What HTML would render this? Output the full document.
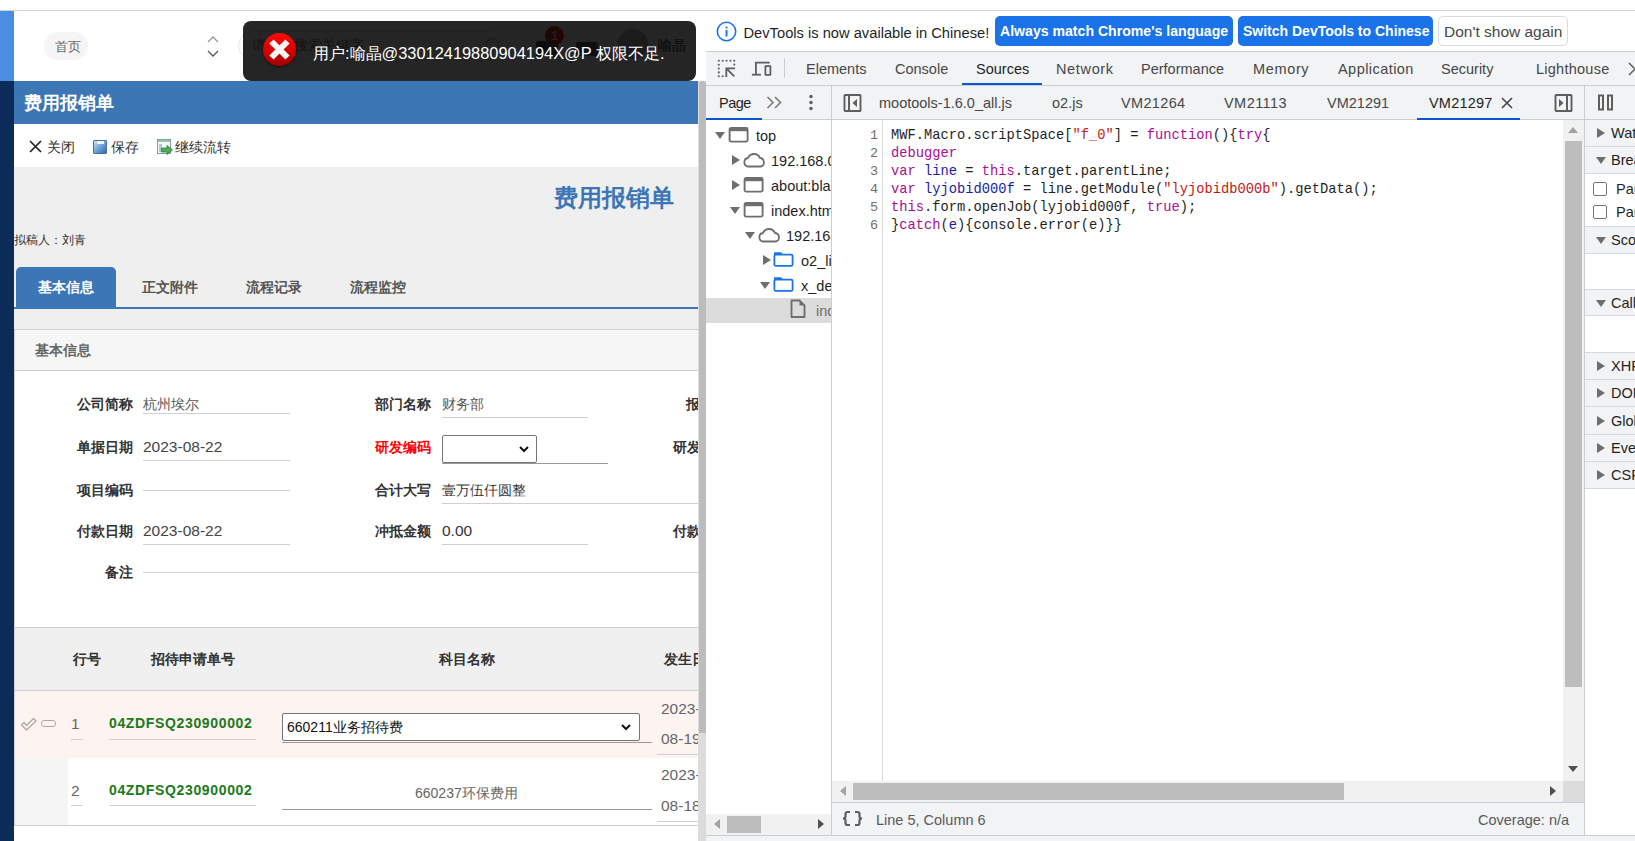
<!DOCTYPE html>
<html><head><meta charset="utf-8">
<style>
*{margin:0;padding:0;box-sizing:border-box}
html,body{width:1635px;height:841px;overflow:hidden;background:#fff;font-family:"Liberation Sans",sans-serif;position:relative}
.a{position:absolute}
.t{position:absolute;white-space:nowrap;line-height:1}
/* left app */
#topline{left:0;top:10px;width:1635px;height:1px;background:#d3d3d3}
#sbBlue{left:0;top:11px;width:14px;height:70px;background:#4a90e2}
#sbNavy{left:0;top:81px;width:14px;height:760px;background:#0b2c58}
#titlebar{left:14px;top:81px;width:684px;height:43px;background:#3d76b5}
#toolbar{left:14px;top:124px;width:685px;height:43px;background:#fff}
#graybg{left:14px;top:167px;width:685px;height:163px;background:#efefef}
.lbl{font-size:14px;font-weight:bold;color:#333}
.val{font-size:14px;color:#555}
.ul{height:1px;background:#d0d0d0}
</style></head><body>
<div id="topline" class="a"></div>
<div id="sbBlue" class="a"></div>
<div id="sbNavy" class="a"></div>

<!-- header -->
<div class="a" style="left:44px;top:32px;width:44px;height:28px;border-radius:14px;background:#f5f5f5"></div>
<div class="t" style="left:54.5px;top:39.5px;font-size:13px;color:#666">首页</div>

<div id="titlebar" class="a"></div>
<div class="t" style="left:24px;top:94px;font-size:18px;font-weight:bold;color:#fff">费用报销单</div>
<div id="toolbar" class="a"></div>
<div id="graybg" class="a"></div>

<!-- header right (under toast) -->
<div class="a" style="left:207px;top:36px;width:0;height:0"></div>
<svg class="a" style="left:205px;top:34px" width="16" height="26" viewBox="0 0 16 26"><path d="M3 8 L8 3 L13 8" fill="none" stroke="#999" stroke-width="1.3"/><path d="M3 17 L8 22 L13 17" fill="none" stroke="#555" stroke-width="1.3"/></svg>
<div class="a" style="left:238px;top:31px;width:270px;height:29px;border:1px solid #e3e3e3;border-radius:15px"></div>
<div class="t" style="left:252px;top:38px;font-size:14px;color:#888">请输入搜索关键字</div>
<div class="a" style="left:486px;top:38px;width:13px;height:13px;border:1.5px solid #999;border-radius:50%"></div>
<div class="a" style="left:536px;top:41px;width:22px;height:16px;background:#555;border-radius:2px"></div>
<div class="a" style="left:545px;top:26px;width:19px;height:19px;background:#e0292b;border-radius:50%"></div>
<div class="t" style="left:551px;top:29px;font-size:13px;color:#fff">1</div>
<div class="a" style="left:576px;top:42px;width:22px;height:14px;background:#666;border-radius:2px"></div>
<div class="a" style="left:618px;top:29px;width:30px;height:30px;background:#bbb;border-radius:50%"></div>
<div class="t" style="left:658px;top:38px;font-size:14px;color:#333">喻晶</div>

<!-- toolbar -->
<svg class="a" style="left:29px;top:140px" width="13" height="13" viewBox="0 0 13 13"><path d="M1 1 L12 12 M12 1 L1 12" stroke="#222" stroke-width="1.7"/></svg>
<div class="t" style="left:47px;top:140px;font-size:14px;color:#333">关闭</div>
<div class="a" style="left:93px;top:140px;width:14px;height:14px;background:linear-gradient(135deg,#cfe3f7,#6fa3da 50%,#2f6db5);border:1px solid #4a6f9a;border-radius:1px"></div>
<div class="a" style="left:97px;top:141px;width:7px;height:3px;background:#f2f6fb"></div>
<div class="t" style="left:111px;top:140px;font-size:14px;color:#333">保存</div>
<div class="a" style="left:157px;top:139px;width:14px;height:15px;background:#f4f7fb;border:1px solid #7d9cc0"></div>
<div class="a" style="left:158px;top:140px;width:12px;height:2px;background:#9fc39f"></div>
<div class="a" style="left:159px;top:144px;width:3px;height:8px;background:#b7c7da"></div>
<svg class="a" style="left:161px;top:145px" width="12" height="10" viewBox="0 0 12 10"><path d="M0.5 3 L6 3 L6 0.5 L11.5 5 L6 9.5 L6 7 L0.5 7 Z" fill="#4caf50" stroke="#2e7d32" stroke-width="0.8"/></svg>
<div class="t" style="left:175px;top:140px;font-size:14px;color:#333">继续流转</div>

<!-- form title -->
<div class="t" style="left:554px;top:186px;font-size:24px;font-weight:bold;color:#3d76b6">费用报销单</div>
<div class="t" style="left:14px;top:234px;font-size:12px;color:#333">拟稿人：刘青</div>

<!-- tabs -->
<div class="a" style="left:16px;top:267px;width:100px;height:42px;background:#3d76b6;border-radius:5px 5px 0 0"></div>
<div class="t" style="left:38px;top:280px;font-size:14px;font-weight:bold;color:#fff">基本信息</div>
<div class="t" style="left:142px;top:280px;font-size:14px;font-weight:bold;color:#555">正文附件</div>
<div class="t" style="left:246px;top:280px;font-size:14px;font-weight:bold;color:#555">流程记录</div>
<div class="t" style="left:350px;top:280px;font-size:14px;font-weight:bold;color:#555">流程监控</div>
<div class="a" style="left:14px;top:307px;width:685px;height:2px;background:#3d76b6"></div>

<!-- section header -->
<div class="a" style="left:14px;top:329px;width:685px;height:42px;background:#f6f6f6;border-top:1px solid #cfcfcf;border-bottom:1px solid #cfcfcf"></div>
<div class="t" style="left:35px;top:343px;font-size:14px;font-weight:bold;color:#666">基本信息</div>
<div class="a" style="left:14px;top:329px;width:1px;height:497px;background:#cfcfcf"></div>

<!-- form rows -->
<div class="t lbl" style="left:77px;top:397px">公司简称</div>
<div class="t val" style="left:143px;top:397px">杭州埃尔</div>
<div class="a ul" style="left:143px;top:413px;width:147px"></div>
<div class="t lbl" style="left:77px;top:440px">单据日期</div>
<div class="t val" style="left:143px;top:439px;color:#444;font-size:15.5px">2023-08-22</div>
<div class="a ul" style="left:143px;top:460px;width:147px"></div>
<div class="t lbl" style="left:77px;top:483px">项目编码</div>
<div class="a ul" style="left:143px;top:490px;width:147px"></div>
<div class="t lbl" style="left:77px;top:524px">付款日期</div>
<div class="t val" style="left:143px;top:523px;color:#444;font-size:15.5px">2023-08-22</div>
<div class="a ul" style="left:143px;top:544px;width:147px"></div>
<div class="t lbl" style="left:105px;top:565px">备注</div>
<div class="a ul" style="left:143px;top:572px;width:556px"></div>

<div class="t lbl" style="left:375px;top:397px">部门名称</div>
<div class="t val" style="left:442px;top:397px">财务部</div>
<div class="a ul" style="left:442px;top:417px;width:146px"></div>
<div class="t lbl" style="left:375px;top:440px;color:#f00">研发编码</div>
<div class="a" style="left:442px;top:435px;width:95px;height:28px;border:1px solid #767676;border-radius:2px;background:#fff"></div>
<svg class="a" style="left:518px;top:444px" width="12" height="10" viewBox="0 0 12 10"><path d="M2 3 L6 7 L10 3" fill="none" stroke="#111" stroke-width="2"/></svg>
<div class="a" style="left:442px;top:463px;width:166px;height:1px;background:#999"></div>
<div class="t lbl" style="left:375px;top:483px">合计大写</div>
<div class="t val" style="left:442px;top:483px;color:#333">壹万伍仟圆整</div>
<div class="a ul" style="left:442px;top:503px;width:257px"></div>
<div class="t lbl" style="left:375px;top:524px">冲抵金额</div>
<div class="t val" style="left:442px;top:523px;color:#333;font-size:15.5px">0.00</div>
<div class="a ul" style="left:442px;top:544px;width:146px"></div>

<div class="t lbl" style="left:686px;top:397px">报</div>
<div class="t lbl" style="left:673px;top:440px">研发</div>
<div class="t lbl" style="left:673px;top:524px">付款</div>

<!-- table -->
<div class="a" style="left:14px;top:627px;width:685px;height:64px;background:#f0f0f0;border-top:1px solid #cfcfcf;border-bottom:1px solid #cfcfcf"></div>
<div class="t lbl" style="left:73px;top:652px">行号</div>
<div class="t lbl" style="left:151px;top:652px">招待申请单号</div>
<div class="t lbl" style="left:439px;top:652px">科目名称</div>
<div class="t lbl" style="left:664px;top:652px">发生日</div>

<div class="a" style="left:15px;top:691px;width:684px;height:67px;background:#fdf4f2"></div>
<svg class="a" style="left:20px;top:717px" width="18" height="15" viewBox="0 0 18 15"><path d="M1.5 8 L4 5.5 L6.5 8.5 L13.5 1.5 L16 4 L6.5 13 Z" fill="none" stroke="#a8a8a8" stroke-width="1.2" stroke-linejoin="round"/></svg>
<div class="a" style="left:41px;top:720px;width:15px;height:7px;border:1.3px solid #aaa;border-radius:3px"></div>
<div class="t" style="left:71px;top:716px;font-size:15.5px;color:#666">1</div>
<div class="a ul" style="left:71px;top:739px;width:12px"></div>
<div class="t" style="left:109px;top:716px;font-size:14px;font-weight:bold;color:#1b7a1b;letter-spacing:0.65px">04ZDFSQ230900002</div>
<div class="a ul" style="left:109px;top:739px;width:147px"></div>
<div class="a" style="left:282px;top:713px;width:358px;height:27.5px;border:1px solid #767676;border-radius:2px;background:#fff"></div>
<div class="t" style="left:287px;top:720px;font-size:14px;color:#111">660211业务招待费</div>
<svg class="a" style="left:620px;top:722px" width="12" height="10" viewBox="0 0 12 10"><path d="M2 3 L6 7 L10 3" fill="none" stroke="#111" stroke-width="2"/></svg>
<div class="a" style="left:282px;top:742px;width:370px;height:1px;background:#999"></div>
<div class="t" style="left:661px;top:701px;font-size:15.5px;color:#666">2023-</div>
<div class="t" style="left:661px;top:731px;font-size:15.5px;color:#666">08-19</div>
<div class="a ul" style="left:657px;top:754px;width:42px"></div>

<div class="a" style="left:15px;top:758px;width:53px;height:67px;background:#f5f5f5"></div>
<div class="t" style="left:71px;top:783px;font-size:15.5px;color:#666">2</div>
<div class="a ul" style="left:71px;top:805px;width:12px"></div>
<div class="t" style="left:109px;top:783px;font-size:14px;font-weight:bold;color:#1b7a1b;letter-spacing:0.65px">04ZDFSQ230900002</div>
<div class="a ul" style="left:109px;top:805px;width:147px"></div>
<div class="t" style="left:415px;top:786px;font-size:14px;color:#666">660237环保费用</div>
<div class="a" style="left:282px;top:809px;width:370px;height:1px;background:#999"></div>
<div class="t" style="left:661px;top:767px;font-size:15.5px;color:#666">2023-</div>
<div class="t" style="left:661px;top:798px;font-size:15.5px;color:#666">08-18</div>
<div class="a ul" style="left:657px;top:821px;width:42px"></div>
<div class="a" style="left:14px;top:825px;width:685px;height:1px;background:#cfcfcf"></div>

<div class="a" style="left:14px;top:627px;width:1px;height:199px;background:#cfcfcf"></div>
<!-- page scrollbar -->
<div class="a" style="left:698px;top:81px;width:8px;height:760px;background:#dcdcdc"></div>
<div class="a" style="left:698.5px;top:81px;width:7px;height:652px;background:#bcbcbc;border-radius:3px 3px 0 0"></div>

<!-- toast -->
<div class="a" style="left:243px;top:21px;width:453px;height:60px;background:rgba(0,0,0,0.855);border-radius:8px"></div>
<div class="a" style="left:263px;top:33px;width:33px;height:33px;border-radius:50%;background:linear-gradient(#ff0a0a,#d80000 50%,#a00000);box-shadow:0 1px 2px rgba(0,0,0,.6)"></div>
<svg class="a" style="left:263px;top:33px" width="33" height="33" viewBox="0 0 33 33"><path d="M8.5 8.5 L24.5 24.5 M24.5 8.5 L8.5 24.5" stroke="#f6f6f6" stroke-width="6" stroke-linecap="butt"/></svg>
<div class="t" style="left:313px;top:44.5px;font-size:16.4px;color:#fff">用户:喻晶@33012419880904194X@P 权限不足.</div>

<!-- ============ DEVTOOLS ============ -->
<style>
.dt{font-family:"Liberation Sans",sans-serif}
.tab{position:absolute;white-space:nowrap;line-height:1;font-size:14.5px;color:#474747}
.code{position:absolute;left:891px;white-space:pre;font-family:"Liberation Mono",monospace;font-size:13.75px;line-height:18px;color:#1f1f1f}
.kw{color:#aa0d91}.vr{color:#1a1aa6}.st{color:#c41a16}
.ln{position:absolute;white-space:pre;font-family:"Liberation Mono",monospace;font-size:13.43px;line-height:18px;color:#6d6d6d;text-align:right;width:30px;left:848px}
.sbh{position:absolute;left:1585px;width:50px;background:#f1f3f4;border-bottom:1px solid #d5d8dc}
.sbt{position:absolute;left:1611px;white-space:nowrap;line-height:1;font-size:14.5px;color:#1f1f1f}
.tri{position:absolute;width:0;height:0}
.trr{border-left:8px solid #6e6e6e;border-top:5px solid transparent;border-bottom:5px solid transparent}
.trd{border-top:7px solid #6e6e6e;border-left:5px solid transparent;border-right:5px solid transparent}
.nvt{position:absolute;white-space:nowrap;line-height:1;font-size:14.5px;color:#1f1f1f}
</style>
<!-- infobar -->
<div class="a" style="left:706px;top:11px;width:929px;height:40px;background:#fff"></div>
<svg class="a" style="left:716px;top:21px" width="21" height="21" viewBox="0 0 21 21"><circle cx="10.5" cy="10.5" r="9.2" fill="none" stroke="#1a73e8" stroke-width="1.6"/><rect x="9.6" y="9" width="1.9" height="6.5" fill="#1a73e8"/><rect x="9.6" y="5.6" width="1.9" height="1.9" fill="#1a73e8"/></svg>
<div class="t" style="left:743.5px;top:25.5px;font-size:14.7px;color:#1f1f1f">DevTools is now available in Chinese!</div>
<div class="a" style="left:995px;top:16px;width:238px;height:30px;background:#1a73e8;border-radius:5px"></div>
<div class="t" style="left:1000px;top:24px;font-size:14.1px;font-weight:bold;color:#fff">Always match Chrome's language</div>
<div class="a" style="left:1238px;top:16px;width:195px;height:30px;background:#1a73e8;border-radius:5px"></div>
<div class="t" style="left:1243px;top:24px;font-size:14px;font-weight:bold;color:#fff">Switch DevTools to Chinese</div>
<div class="a" style="left:1438px;top:16px;width:130px;height:30px;background:#fff;border:1px solid #dadce0;border-radius:5px"></div>
<div class="t" style="left:1444px;top:24px;font-size:15.5px;color:#474747">Don't show again</div>
<div class="a" style="left:706px;top:51px;width:929px;height:1px;background:#cbcdd1"></div>

<!-- main toolbar -->
<div class="a" style="left:706px;top:52px;width:929px;height:33px;background:#f1f3f4"></div>
<div class="a" style="left:706px;top:85px;width:929px;height:1px;background:#cbcdd1"></div>
<svg class="a" style="left:717px;top:59px" width="20" height="20" viewBox="0 0 20 20"><g fill="#5e5e5e"><circle cx="1.8" cy="1.8" r="1.05"/><circle cx="5.7" cy="1.8" r="1.05"/><circle cx="9.55" cy="1.8" r="1.05"/><circle cx="13.4" cy="1.8" r="1.05"/><circle cx="17.3" cy="1.8" r="1.05"/><circle cx="1.8" cy="5.7" r="1.05"/><circle cx="1.8" cy="9.55" r="1.05"/><circle cx="1.8" cy="13.4" r="1.05"/><circle cx="1.8" cy="17.3" r="1.05"/><circle cx="5.7" cy="17.3" r="1.05"/><circle cx="17.3" cy="5.6" r="1.05"/></g><path d="M9.3 18 L9.3 9.3 L18 9.3 M9.8 9.8 L17.3 17.3" stroke="#5e5e5e" stroke-width="1.8" fill="none"/></svg>
<svg class="a" style="left:751px;top:60px" width="22" height="18" viewBox="0 0 22 18"><path d="M4.9 15 L4.9 2.7 L18.7 2.7" stroke="#5e5e5e" stroke-width="1.8" fill="none"/><path d="M0.9 14.7 L9.9 14.7" stroke="#5e5e5e" stroke-width="1.8"/><rect x="14.4" y="6.2" width="5" height="8.6" rx="0.3" fill="none" stroke="#5e5e5e" stroke-width="1.8"/></svg>
<div class="a" style="left:784px;top:58px;width:1px;height:20px;background:#cbcdd1"></div>
<div class="tab" style="left:806px;top:62px">Elements</div>
<div class="tab" style="left:895px;top:62px">Console</div>
<div class="tab" style="left:976px;top:62px;color:#1f1f1f">Sources</div>
<div class="a" style="left:962px;top:83px;width:80px;height:2px;background:#0b57d0"></div>
<div class="tab" style="left:1056px;top:62px;letter-spacing:0.65px">Network</div>
<div class="tab" style="left:1141px;top:62px">Performance</div>
<div class="tab" style="left:1253px;top:62px;letter-spacing:0.65px">Memory</div>
<div class="tab" style="left:1338px;top:62px;letter-spacing:0.45px">Application</div>
<div class="tab" style="left:1441px;top:62px">Security</div>
<div class="tab" style="left:1536px;top:62px;letter-spacing:0.25px">Lighthouse</div>
<svg class="a" style="left:1627px;top:61px" width="12" height="16" viewBox="0 0 12 16"><path d="M2 2 L8 8 L2 14" stroke="#5e5e5e" stroke-width="1.5" fill="none"/></svg>

<!-- sources tabs row -->
<div class="a" style="left:706px;top:86px;width:929px;height:33px;background:#f1f3f4"></div>
<div class="a" style="left:706px;top:119px;width:929px;height:1px;background:#cbcdd1"></div>
<div class="tab" style="left:719px;top:96px;color:#1f1f1f;letter-spacing:-0.5px">Page</div>
<div class="a" style="left:706px;top:118px;width:56px;height:2px;background:#0b57d0"></div>
<svg class="a" style="left:766px;top:96px" width="17" height="13" viewBox="0 0 17 13"><path d="M1.5 1 L7 6.5 L1.5 12 M9 1 L14.5 6.5 L9 12" stroke="#7b7b7b" stroke-width="1.6" fill="none"/></svg>
<svg class="a" style="left:808px;top:94px" width="6" height="17" viewBox="0 0 6 17"><circle cx="3" cy="2.5" r="1.7" fill="#5e5e5e"/><circle cx="3" cy="8.5" r="1.7" fill="#5e5e5e"/><circle cx="3" cy="14.5" r="1.7" fill="#5e5e5e"/></svg>
<div class="a" style="left:831px;top:86px;width:1px;height:750px;background:#cbcdd1"></div>
<svg class="a" style="left:843px;top:94px" width="20" height="19" viewBox="0 0 20 19"><rect x="1.5" y="1" width="16" height="16" rx="0.6" fill="none" stroke="#5e5e5e" stroke-width="1.9"/><path d="M6 1 L6 17" stroke="#5e5e5e" stroke-width="2"/><path d="M14 5 L9.5 9 L14 13 Z" fill="#5e5e5e"/></svg>
<div class="tab" style="left:879px;top:96px">mootools-1.6.0_all.js</div>
<div class="tab" style="left:1052px;top:96px">o2.js</div>
<div class="tab" style="left:1121px;top:96px;letter-spacing:0.35px">VM21264</div>
<div class="tab" style="left:1224px;top:96px;letter-spacing:0.45px">VM21113</div>
<div class="tab" style="left:1327px;top:96px">VM21291</div>
<div class="tab" style="left:1429px;top:96px;color:#1f1f1f;letter-spacing:0.2px">VM21297</div>
<svg class="a" style="left:1500px;top:96px" width="14" height="14" viewBox="0 0 14 14"><path d="M2 2 L12 12 M12 2 L2 12" stroke="#474747" stroke-width="1.6"/></svg>
<div class="a" style="left:1417px;top:118px;width:103px;height:2px;background:#0b57d0"></div>
<svg class="a" style="left:1554px;top:94px" width="20" height="19" viewBox="0 0 20 19"><rect x="1.5" y="1" width="16" height="16" rx="0.6" fill="none" stroke="#5e5e5e" stroke-width="1.9"/><path d="M13 1 L13 17" stroke="#5e5e5e" stroke-width="2"/><path d="M5 5 L9.5 9 L5 13 Z" fill="#5e5e5e"/></svg>
<div class="a" style="left:1584px;top:86px;width:1px;height:750px;background:#cbcdd1"></div>
<svg class="a" style="left:1597px;top:94px" width="18" height="17" viewBox="0 0 18 17"><rect x="2" y="1.5" width="4" height="14" fill="none" stroke="#5e5e5e" stroke-width="2"/><rect x="11" y="1.5" width="4" height="14" fill="none" stroke="#5e5e5e" stroke-width="2"/></svg>

<!-- navigator tree -->
<div class="a" style="left:706px;top:120px;width:125px;height:694px;background:#fff"></div>
<div class="a" style="left:706px;top:298px;width:125px;height:25px;background:#dcdcdc"></div>
<div class="tri trd" style="left:715px;top:132px"></div>
<svg class="a" style="left:728px;top:127px" width="21" height="16" viewBox="0 0 21 16"><rect x="1.6" y="1" width="18" height="13.6" rx="1.5" fill="none" stroke="#6e6e6e" stroke-width="1.9"/><rect x="1.6" y="1" width="18" height="3.2" fill="#6e6e6e"/></svg>
<div class="nvt" style="left:756px;top:129px">top</div>
<div class="tri trr" style="left:732px;top:155px"></div>
<svg class="a" style="left:742px;top:151px" width="24" height="17" viewBox="0 0 24 17"><path d="M6 15.5 L18.5 15.5 A4.3 4.3 0 0 0 18 7 A6.5 6.5 0 0 0 6 7 A4.3 4.3 0 0 0 6 15.5 Z" fill="none" stroke="#6e6e6e" stroke-width="1.8"/></svg>
<div class="nvt" style="left:771px;top:154px">192.168.0.</div>
<div class="tri trr" style="left:732px;top:180px"></div>
<svg class="a" style="left:743px;top:177px" width="21" height="16" viewBox="0 0 21 16"><rect x="1.6" y="1" width="18" height="13.6" rx="1.5" fill="none" stroke="#6e6e6e" stroke-width="1.9"/><rect x="1.6" y="1" width="18" height="3.2" fill="#6e6e6e"/></svg>
<div class="nvt" style="left:771px;top:179px">about:blank</div>
<div class="tri trd" style="left:730px;top:207px"></div>
<svg class="a" style="left:743px;top:202px" width="21" height="16" viewBox="0 0 21 16"><rect x="1.6" y="1" width="18" height="13.6" rx="1.5" fill="none" stroke="#6e6e6e" stroke-width="1.9"/><rect x="1.6" y="1" width="18" height="3.2" fill="#6e6e6e"/></svg>
<div class="nvt" style="left:771px;top:204px">index.html</div>
<div class="tri trd" style="left:745px;top:232px"></div>
<svg class="a" style="left:757px;top:226px" width="24" height="17" viewBox="0 0 24 17"><path d="M6 15.5 L18.5 15.5 A4.3 4.3 0 0 0 18 7 A6.5 6.5 0 0 0 6 7 A4.3 4.3 0 0 0 6 15.5 Z" fill="none" stroke="#6e6e6e" stroke-width="1.8"/></svg>
<div class="nvt" style="left:786px;top:229px">192.168.</div>
<div class="tri trr" style="left:763px;top:255px"></div>
<svg class="a" style="left:773px;top:251px" width="21" height="16" viewBox="0 0 21 16"><path d="M1 1.2 L8 1.2 L10 3.2 L10 4 L1 4 Z" fill="#1a73e8"/><rect x="1.4" y="3.6" width="18.2" height="11.3" rx="1.5" fill="none" stroke="#1a73e8" stroke-width="1.8"/></svg>
<div class="nvt" style="left:801px;top:254px">o2_lib</div>
<div class="tri trd" style="left:760px;top:282px"></div>
<svg class="a" style="left:773px;top:276px" width="21" height="16" viewBox="0 0 21 16"><path d="M1 1.2 L8 1.2 L10 3.2 L10 4 L1 4 Z" fill="#1a73e8"/><rect x="1.4" y="3.6" width="18.2" height="11.3" rx="1.5" fill="none" stroke="#1a73e8" stroke-width="1.8"/></svg>
<div class="nvt" style="left:801px;top:279px">x_desktop</div>
<svg class="a" style="left:790px;top:299px" width="17" height="19" viewBox="0 0 17 19"><path d="M1.5 1.5 L9.5 1.5 L14.5 6.5 L14.5 18 L1.5 18 Z" fill="none" stroke="#6e6e6e" stroke-width="1.9" stroke-linejoin="round"/><path d="M9.5 1.5 L14.5 6.5 L9.5 6.5 Z" fill="#6e6e6e"/></svg>
<div class="nvt" style="left:816px;top:304px;color:#6e6e6e">index.html</div>
<div class="a" style="left:831px;top:120px;width:804px;height:1px"></div>
<!-- re-cover overflow of nav texts -->
<div class="a" style="left:831px;top:120px;width:1px;height:716px;background:#cbcdd1"></div>
<div class="a" style="left:832px;top:120px;width:752px;height:661px;background:#fff"></div>

<!-- nav horizontal scrollbar -->
<div class="a" style="left:706px;top:814px;width:125px;height:21px;background:#f1f1f1"></div>
<div class="a" style="left:727px;top:816px;width:34px;height:17px;background:#bdbdbd"></div>
<div class="tri" style="left:714px;top:819px;border-right:6px solid #a3a3a3;border-top:5px solid transparent;border-bottom:5px solid transparent"></div>
<div class="tri" style="left:818px;top:819px;border-left:6px solid #505050;border-top:5px solid transparent;border-bottom:5px solid transparent"></div>

<!-- editor -->
<div class="a" style="left:882px;top:120px;width:1px;height:661px;background:#d9d9d9"></div>
<div class="ln" style="top:127px">1
2
3
4
5
6</div>
<div class="code" style="top:127px">MWF.Macro.scriptSpace[<span class="st">"f_0"</span>] = <span class="kw">function</span>(){<span class="kw">try</span>{
<span class="kw">debugger</span>
<span class="kw">var</span> <span class="vr">line</span> = <span class="kw">this</span>.target.parentLine;
<span class="kw">var</span> <span class="vr">lyjobid000f</span> = line.getModule(<span class="st">"lyjobidb000b"</span>).getData();
<span class="kw">this</span>.form.openJob(lyjobid000f, <span class="kw">true</span>);
}<span class="kw">catch</span>(<span class="vr">e</span>){console.error(e)}}</div>

<!-- editor v scrollbar -->
<div class="a" style="left:1563px;top:120px;width:21px;height:661px;background:#f1f1f1"></div>
<div class="a" style="left:1565px;top:141px;width:17px;height:546px;background:#bdbdbd"></div>
<div class="tri" style="left:1568px;top:127px;border-bottom:6px solid #a3a3a3;border-left:5px solid transparent;border-right:5px solid transparent"></div>
<div class="tri" style="left:1568px;top:766px;border-top:6px solid #505050;border-left:5px solid transparent;border-right:5px solid transparent"></div>
<!-- editor h scrollbar -->
<div class="a" style="left:832px;top:781px;width:731px;height:21px;background:#f1f1f1"></div>
<div class="a" style="left:853px;top:783px;width:491px;height:17px;background:#bdbdbd"></div>
<div class="a" style="left:1563px;top:781px;width:21px;height:21px;background:#dcdcdc"></div>
<div class="tri" style="left:840px;top:786px;border-right:6px solid #a3a3a3;border-top:5px solid transparent;border-bottom:5px solid transparent"></div>
<div class="tri" style="left:1550px;top:786px;border-left:6px solid #505050;border-top:5px solid transparent;border-bottom:5px solid transparent"></div>
<div class="a" style="left:832px;top:802px;width:752px;height:1px;background:#cbcdd1"></div>
<!-- status bar -->
<div class="a" style="left:832px;top:803px;width:752px;height:32px;background:#f1f3f4"></div>
<svg class="a" style="left:841px;top:810px" width="23" height="17" viewBox="0 0 23 17"><path d="M9 2 L6.5 2 Q4.5 2 4.5 4 L4.5 6.5 Q4.5 8.5 2 8.5 Q4.5 8.5 4.5 10.5 L4.5 13 Q4.5 15 6.5 15 L9 15 M14 2 L16.5 2 Q18.5 2 18.5 4 L18.5 6.5 Q18.5 8.5 21 8.5 Q18.5 8.5 18.5 10.5 L18.5 13 Q18.5 15 16.5 15 L14 15" fill="none" stroke="#5e5e5e" stroke-width="2.2"/></svg>
<div class="tab" style="left:876px;top:812.5px;color:#5a5a5a">Line 5, Column 6</div>
<div class="tab" style="left:1478px;top:812.5px;color:#5a5a5a">Coverage: n/a</div>
<div class="a" style="left:706px;top:835px;width:929px;height:1px;background:#cbcdd1"></div>
<div class="a" style="left:706px;top:836px;width:929px;height:5px;background:#f1f3f4"></div>

<!-- right sidebar -->
<div class="a" style="left:1585px;top:120px;width:50px;height:715px;background:#fff"></div>
<div class="sbh" style="top:120px;height:27px"></div><div class="tri trr" style="left:1597px;top:128px"></div><div class="sbt" style="top:126px">Watch</div>
<div class="sbh" style="top:147px;height:27px"></div><div class="tri trd" style="left:1596px;top:157px"></div><div class="sbt" style="top:153px">Breakpoints</div>
<div class="a" style="left:1593px;top:182px;width:14px;height:14px;border:1.3px solid #767676;border-radius:2px"></div><div class="sbt" style="left:1616px;top:182px">Pause</div>
<div class="a" style="left:1593px;top:205px;width:14px;height:14px;border:1.3px solid #767676;border-radius:2px"></div><div class="sbt" style="left:1616px;top:205px">Pause</div>
<div class="a" style="left:1585px;top:226px;width:50px;height:1px;background:#d5d8dc"></div>
<div class="sbh" style="top:227px;height:27px"></div><div class="tri trd" style="left:1596px;top:237px"></div><div class="sbt" style="top:233px">Scope</div>
<div class="a" style="left:1585px;top:289px;width:50px;height:1px;background:#d5d8dc"></div>
<div class="sbh" style="top:290px;height:26px"></div><div class="tri trd" style="left:1596px;top:300px"></div><div class="sbt" style="top:296px">Call Stack</div>
<div class="a" style="left:1585px;top:352px;width:50px;height:1px;background:#d5d8dc"></div>
<div class="sbh" style="top:353px;height:27px"></div><div class="tri trr" style="left:1597px;top:361px"></div><div class="sbt" style="top:359px">XHR/fetch</div>
<div class="sbh" style="top:380px;height:27px"></div><div class="tri trr" style="left:1597px;top:388px"></div><div class="sbt" style="top:386px">DOM</div>
<div class="sbh" style="top:407px;height:28px"></div><div class="tri trr" style="left:1597px;top:416px"></div><div class="sbt" style="top:414px">Global</div>
<div class="sbh" style="top:435px;height:27px"></div><div class="tri trr" style="left:1597px;top:443px"></div><div class="sbt" style="top:441px">Event</div>
<div class="sbh" style="top:462px;height:27px"></div><div class="tri trr" style="left:1597px;top:470px"></div><div class="sbt" style="top:468px">CSP</div>
<div class="a" style="left:1584px;top:120px;width:1px;height:715px;background:#cbcdd1"></div>

</body></html>
